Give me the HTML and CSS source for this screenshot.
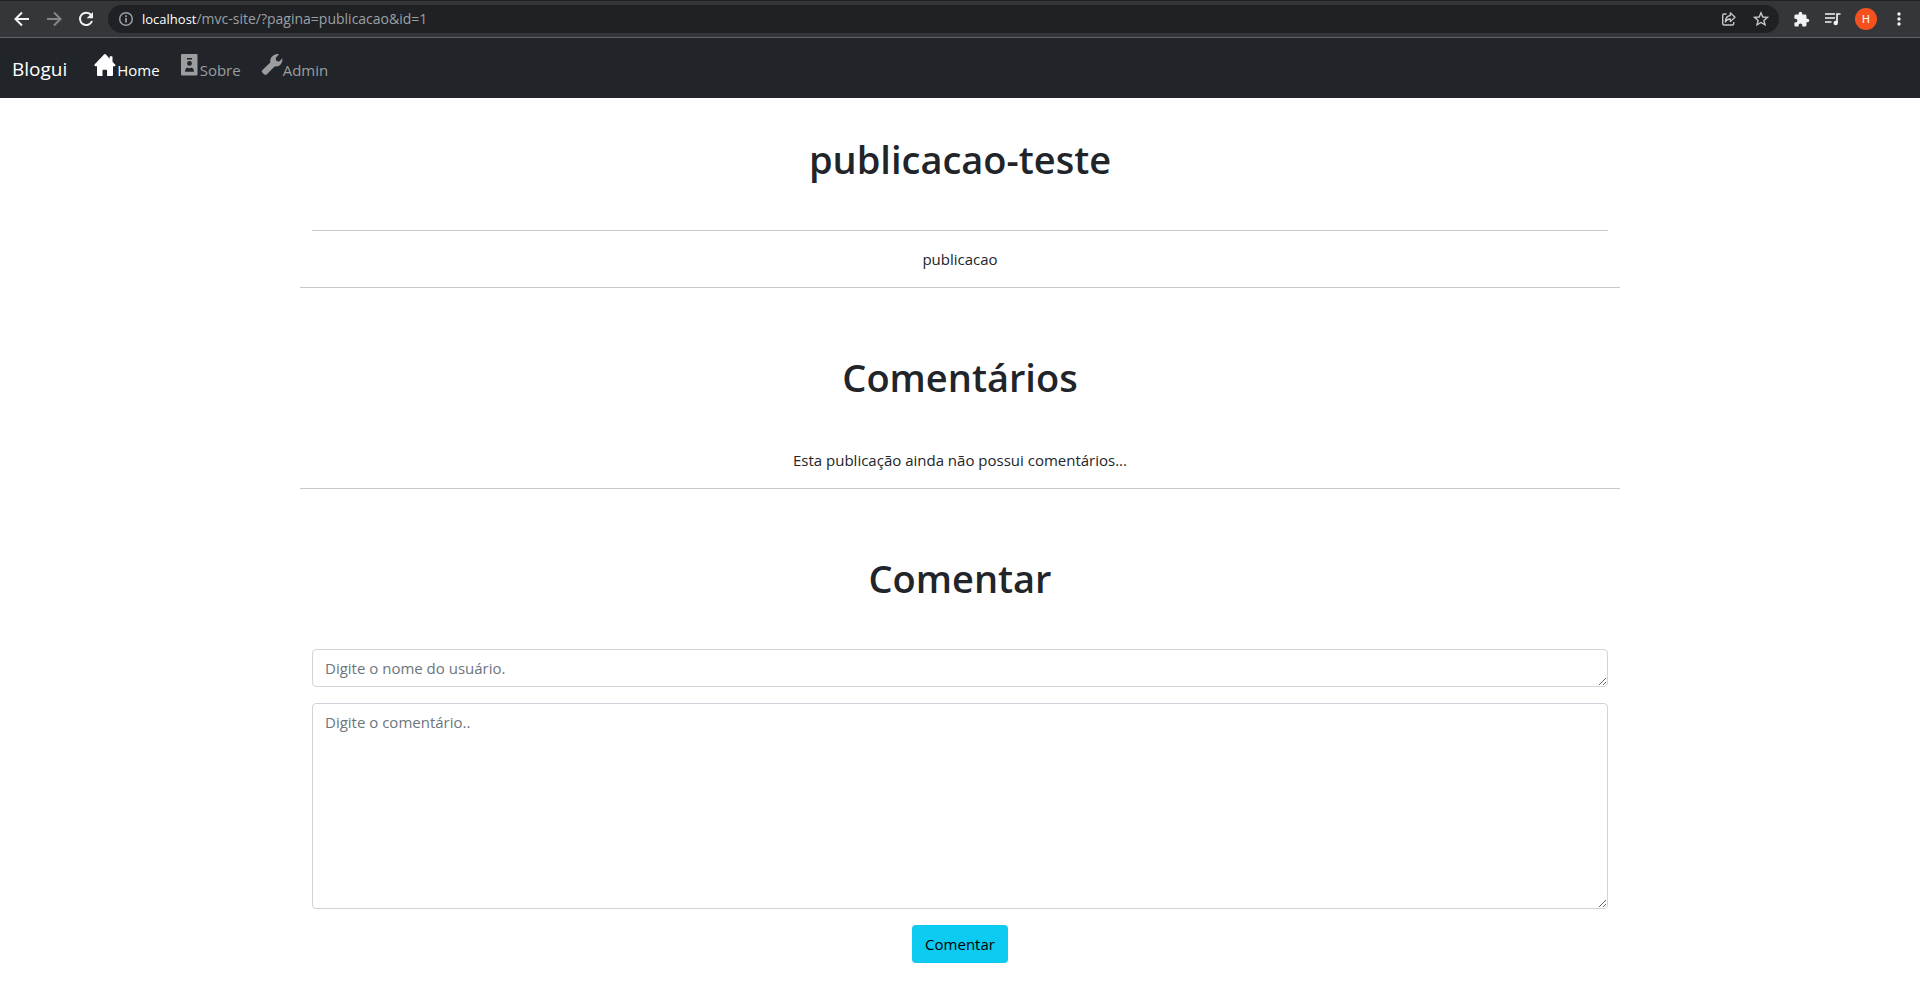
FILE: index.html
```
<!DOCTYPE html>
<html lang="pt-BR">
<head>
<meta charset="utf-8">
<meta name="viewport" content="width=device-width, initial-scale=1">
<title>Blogui</title>
<link rel="stylesheet" href="styles.css">
</head>
<body>
<div class="browser-bar">
  <button class="tool tool-back" type="button" aria-label="Voltar"><svg width="16" height="16" viewBox="0 0 16 16"><path d="M15 8H2M8 1.5 1.5 8 8 14.500" fill="none" stroke="currentColor" stroke-width="2"/></svg></button>
  <button class="tool tool-forward" type="button" aria-label="Avançar"><svg width="16" height="16" viewBox="0 0 16 16"><path d="M1 8h13M8 1.500 14.500 8 8 14.500" fill="none" stroke="currentColor" stroke-width="2"/></svg></button>
  <button class="tool tool-reload" type="button" aria-label="Recarregar"><svg width="16" height="16" viewBox="0 0 16 16"><path d="M13.200 4.200A6.200 6.200 0 1 0 14 10" fill="none" stroke="currentColor" stroke-width="2"/><path d="M15 1v6.300H8.700z" fill="currentColor"/></svg></button>
  <div class="address">
    <svg class="info" width="16" height="16" viewBox="0 0 16 16"><circle cx="8" cy="8" r="6.300" fill="none" stroke="currentColor" stroke-width="1.500"/><path d="M8 7v4.500M8 4.300v1.700" stroke="currentColor" stroke-width="1.700"/></svg>
    <span class="url"><span class="host">localhost</span>/mvc-site/?pagina=publicacao&amp;id=1</span>
    <button class="tool small" type="button" aria-label="Compartilhar"><svg width="16" height="16" viewBox="0 0 16 16"><path d="M5.500 3H3Q1.700 3 1.700 4.300v8.400Q1.700 14 3 14h8.400q1.300 0 1.300-1.300V11" fill="none" stroke="currentColor" stroke-width="1.400"/><path d="M9.300 1.800 14 6.200 9.300 10.500V8Q6 7.800 4.300 11 4.600 5 9.300 4.500z" fill="none" stroke="currentColor" stroke-width="1.300" stroke-linejoin="round"/></svg></button>
    <button class="tool small" type="button" aria-label="Favoritar"><svg width="16" height="16" viewBox="0 0 16 16"><path d="m8 1.800 1.800 4.200 4.600.4-3.500 3 1.100 4.500L8 11.500l-4 2.400 1.100-4.500-3.500-3L6.200 6z" fill="none" stroke="currentColor" stroke-width="1.400"/></svg></button>
  </div>
  <div class="extensions">
    <button class="tool" type="button" aria-label="Extensões"><svg width="17" height="17" viewBox="0 0 24 24"><path fill="currentColor" d="M20.500 11H19V7a2 2 0 0 0-2-2h-4V3.500a2.500 2.500 0 0 0-5 0V5H4a2 2 0 0 0-2 2v3.800h1.500a2.700 2.700 0 0 1 0 5.400H2V20a2 2 0 0 0 2 2h3.800v-1.500a2.700 2.700 0 0 1 5.400 0V22H17a2 2 0 0 0 2-2v-4h1.500a2.500 2.500 0 0 0 0-5z"/></svg></button>
    <button class="tool" type="button" aria-label="Controle de mídia"><svg width="17" height="16" viewBox="0 0 17 16"><path d="M1 3h10M1 7h10M1 11h6.500M13 12V3h3.500" fill="none" stroke="currentColor" stroke-width="1.700"/><circle cx="11.700" cy="12" r="2.200" fill="currentColor"/></svg></button>
    <button class="avatar" type="button" aria-label="Perfil">H</button>
    <button class="tool" type="button" aria-label="Menu"><svg width="16" height="16" viewBox="0 0 16 16" fill="currentColor"><circle cx="8" cy="3" r="1.700"/><circle cx="8" cy="8" r="1.700"/><circle cx="8" cy="13" r="1.700"/></svg></button>
  </div>
</div>
<nav class="navbar">
  <a class="brand" href="#">Blogui</a>
  <a class="nav-link active" href="#"><svg width="24" height="24" viewBox="0 0 24 24"><path fill="currentColor" d="M12 1Q11.500 1 11 1.500L1.500 11.500Q1 13 2.500 13.300H4V22q0 1 1 1h4.500v-5.500q0-.8.800-.8h3q.8 0 .8.800V23H19q1 0 1-1v-8.700h1.700q1.300-.4.600-1.600L19.500 8.700V4q0-.7-.7-.7h-1.500q-.7 0-.7.700v1.700L13 1.500Q12.500 1 12 1z"/></svg>Home</a>
  <a class="nav-link" href="#"><svg width="20" height="24" viewBox="0 0 20 24"><path fill="currentColor" fill-rule="evenodd" d="M2 1h14.500q1 0 1 1v19.500q0 1-1 1H2q-1 0-1-1V2q0-1 1-1zm5 4v1.400h5V5zm2.500 3a2.400 2.400 0 1 0 0 4.800 2.400 2.400 0 0 0 0-4.800zM5 18.700h9q0-3.200-2.200-4.200-2.300 1.600-4.600 0Q5 15.500 5 18.700z"/></svg>Sobre</a>
  <a class="nav-link" href="#"><svg width="22" height="24" viewBox="0 0 22 24"><path fill="currentColor" d="M14.500 1.300q2-.7 3.500.1l-3.400 3.500.8 3 3 .7 2.900-3.300q.6 2.500-.9 5-2.200 3.700-6.800 3.100l-7.700 7.900q-1.200 1-2.600.1L1 19.200q-.7-1 .2-2L9.300 9.500Q8.500 3.600 14.500 1.300z"/></svg>Admin</a>
</nav>
<main class="container">
  <article>
    <h1>publicacao-teste</h1>
    <div class="post"><hr><p>publicacao</p></div>
  </article>
  <hr>
  <section>
    <h2>Comentários</h2>
    <p>Esta publicação ainda não possui comentários...</p>
  </section>
  <hr>
  <section>
    <h2>Comentar</h2>
    <form class="comment-form">
      <textarea class="field" rows="1" placeholder="Digite o nome do usuário." aria-label="Nome do usuário"></textarea>
      <textarea class="field" rows="8" placeholder="Digite o comentário.." aria-label="Comentário"></textarea>
      <button class="submit" type="submit">Comentar</button>
    </form>
  </section>
</main>
</body>
</html>
```
FILE: styles.css
```
* { box-sizing: border-box; }
body {
  margin: 0;
  background: #fff;
  color: #212529;
  font-family: "Open Sans", "Noto Sans", sans-serif;
  font-size: 15px;
  line-height: 24px;
}
button { font-family: inherit; border: 0; padding: 0; background: none; }
svg { display: block; }

.browser-bar {
  display: flex;
  align-items: center;
  height: 38px;
  padding: 0 13px 0 14px;
  background: #35363a;
  border-top: 1px solid #202124;
  border-bottom: 1px solid #5f6368;
}
.tool { display: flex; color: #f1f3f4; }
.tool-back, .tool-forward { margin-right: 16px; }
.tool-forward { color: #84868a; }
.tool-reload { margin-right: 14px; }
.address {
  display: flex;
  flex: 1;
  align-items: center;
  gap: 16px;
  height: 28px;
  padding: 0 10px;
  border-radius: 14px;
  background: #202124;
}
.info { color: #9aa0a6; margin-right: -8px; }
.url { flex: 1; color: #9aa0a6; font-size: 14px; }
.host { color: #fff; font-size: 13px; }
.small { color: #c4c7ca; }
.extensions { display: flex; align-items: center; gap: 14px; margin-left: 14px; }
.avatar {
  width: 22px;
  height: 22px;
  border-radius: 50%;
  background: #f4511e;
  color: #fff;
  font-family: Roboto, sans-serif;
  font-size: 11px;
}

.navbar {
  display: flex;
  align-items: center;
  gap: 20px;
  height: 60px;
  padding: 0 12px;
  background: #212529;
}
.navbar a { text-decoration: none; }
.brand { color: #fff; font-size: 19px; margin-right: 6px; padding-top: 2px; }
.nav-link { display: flex; align-items: flex-start; color: #9b9d9f; line-height: 34px; padding-top: 4px; }
.active { color: #fff; }

.container { max-width: 1320px; margin: 0 auto; text-align: center; }
h1, h2 {
  margin: 0;
  padding-bottom: 47px;
  font-size: 38px;
  font-weight: 600;
  line-height: 48px;
}
h1 { padding-top: 37px; }
h2 { padding-top: 65px; }
hr { margin: 0; border: 0; border-top: 1px solid #c8c9ca; }
p { margin: 0; padding-bottom: 16px; }
.post { padding: 0 12px; }
.post p { padding-top: 16px; }
.comment-form {
  display: flex;
  flex-direction: column;
  align-items: center;
  gap: 16px;
  padding: 0 12px 26px;
}
.field {
  width: 100%;
  padding: 6px 12px;
  border: 1px solid #ced4da;
  border-radius: 4px;
  background: #fff;
  color: #212529;
  font: inherit;
  overflow: auto;
  resize: vertical;
}
.field::placeholder { color: #6c757d; }
.submit {
  padding: 7px 13px;
  border-radius: 4px;
  background: #0dcaf0;
  color: #000;
  font-size: 15px;
  line-height: 24px;
}
```
